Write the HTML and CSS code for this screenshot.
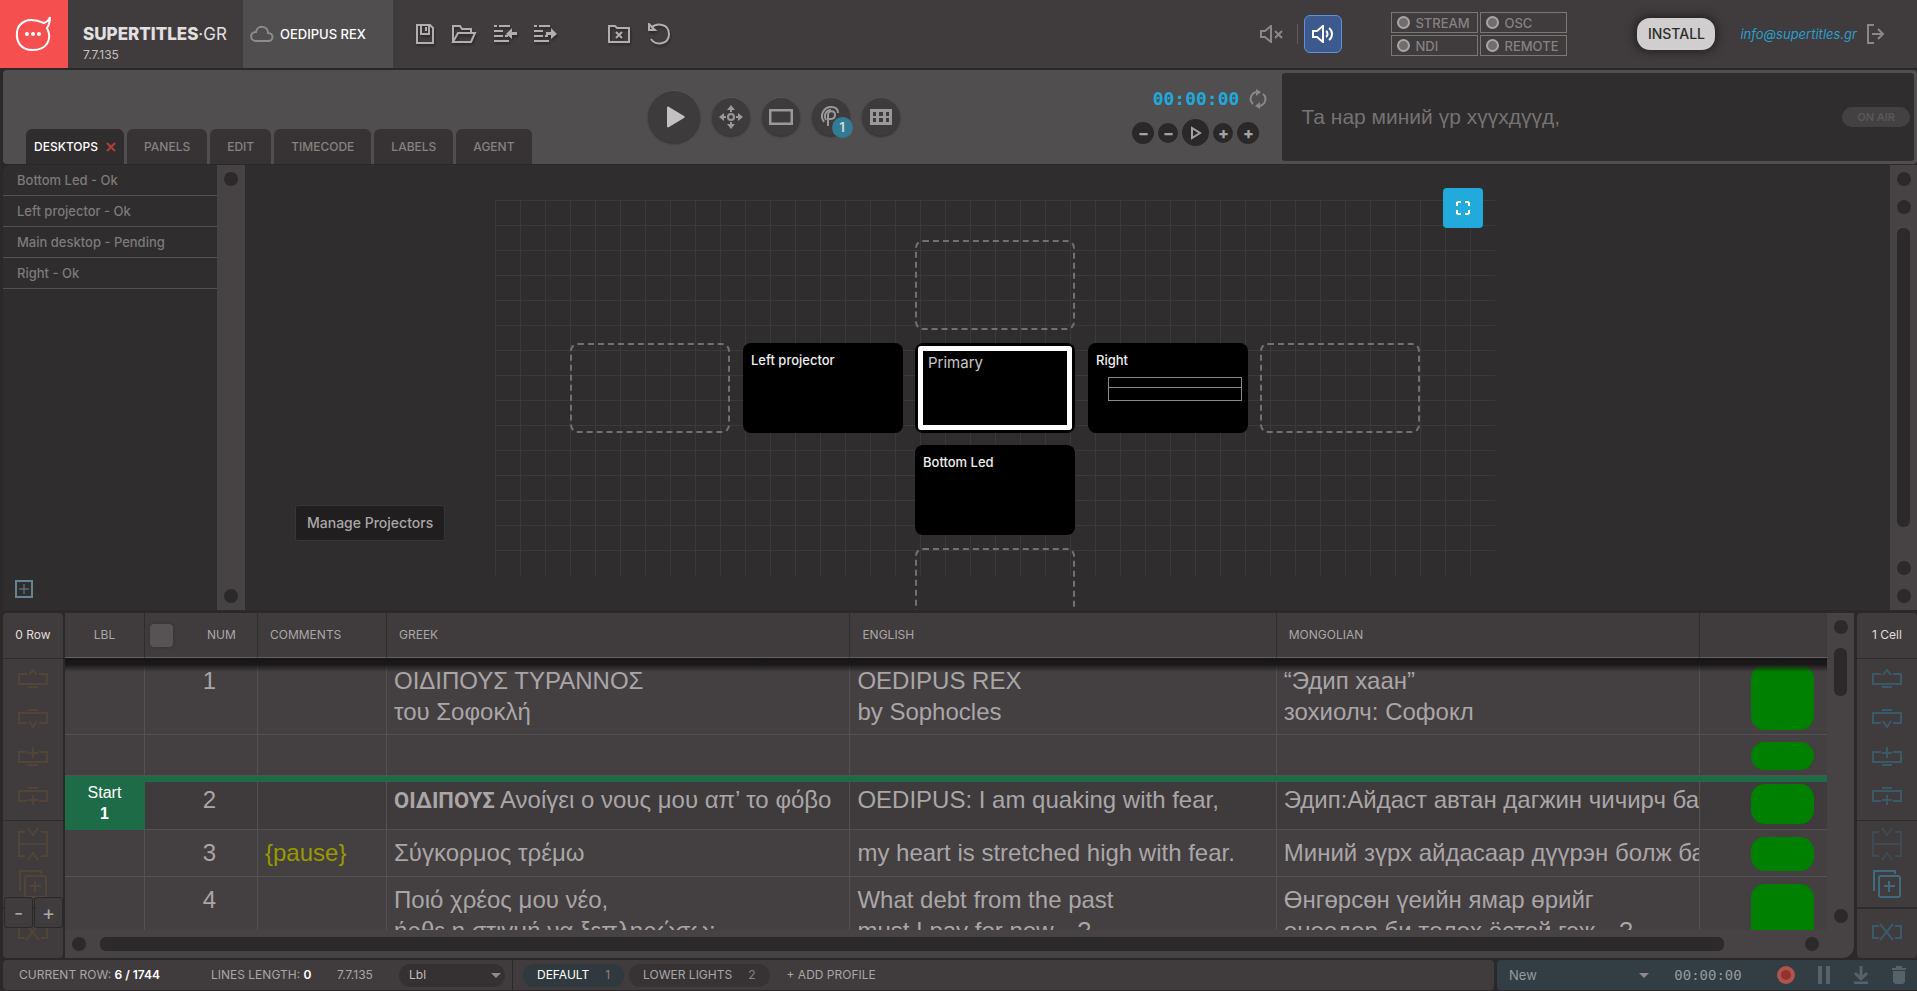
FILE: index.html
```html
<!DOCTYPE html>
<html lang="en">
<head>
<meta charset="utf-8">
<title>Supertitles - Oedipus Rex</title>
<link rel="stylesheet" href="styles.css">
</head>
<body>
<svg class="defs" aria-hidden="true">
  <symbol id="i-row-up" viewBox="0 0 30 20"><path d="M9 5H1v10h28V5h-8M10 18h10M11 6l4-5 4 5"/></symbol>
  <symbol id="i-row-down" viewBox="0 0 30 20"><path d="M9 15H1V5h28v10h-8M10 2h10M11 13l4 6 4-6"/></symbol>
  <symbol id="i-add-up" viewBox="0 0 30 20"><path d="M9 5H1v10h28V5h-8M10 18h10M10 6h10M15 0v11"/></symbol>
  <symbol id="i-add-down" viewBox="0 0 30 20"><path d="M9 15H1V5h28v10h-8M10 2h10M10 14h10M15 9v10"/></symbol>
  <symbol id="i-merge" viewBox="0 0 30 34"><path d="M7 5H1v24h6M23 5h6v24h-6M1 17h28M10 1l5 7 5-7M10 33l5-7 5 7"/></symbol>
  <symbol id="i-dup" viewBox="0 0 30 30"><path d="M2 22V2h21v3M9 7h17q2 0 2 2v17q0 2-2 2H9q-2 0-2-2V9q0-2 2-2zM12 17h11M17 12v11"/></symbol>
  <symbol id="i-del" viewBox="0 0 30 18"><path d="M7 3H1v12h6M23 3h6v12h-6M8 1l13 16M21 1L8 17"/></symbol>
  <symbol id="i-lines" viewBox="0 0 24 20"><path d="M1 2h3M6 2h11M1 7h9M1 12h9M12 12h3M1 17h15"/></symbol>
</svg>
<div class="app">
  <header class="topbar">
    <a class="logo" href="#" aria-label="Supertitles home">
      <svg width="38" height="38" viewBox="0 0 38 38" fill="none" stroke="#fff" stroke-width="2"><path d="M29 8c3-1 5-3 6-6 0 4-1 8-3 11 6 12-1 22-14 22S1 26 2 17 12 1 29 8z"/><g fill="#fff" stroke="none"><circle cx="12" cy="19" r="2"/><circle cx="18" cy="19" r="2"/><circle cx="24" cy="19" r="2"/></g></svg>
    </a>
    <div class="brand"><div class="brand-name"><b>SUPERTITLES</b>·GR</div><div class="version">7.7.135</div></div>
    <div class="project">
      <svg width="24" height="18" viewBox="0 0 24 18" fill="none" stroke="#8e8c8d" stroke-width="2"><path d="M6 16h12c6 0 6-8 0-8C18 0 7 0 6 7c-7 0-6 9 0 9z"/></svg>
      <span>OEDIPUS REX</span>
    </div>
    <nav class="filetools" aria-label="File">
      <button aria-label="Save"><svg width="20" height="20" viewBox="0 0 20 20"><path d="M2 1h13l3 3v15H2zM6 1v9h8V1M11 3v4"/></svg></button>
      <button aria-label="Open"><svg width="26" height="20" viewBox="0 0 26 20"><path d="M2 18V2h7l2 3h9v4M2 18L7 9h17l-4 9z"/></svg></button>
      <button aria-label="Import"><svg width="24" height="20" viewBox="0 0 24 20"><use href="#i-lines"/><path class="solid" d="M24 8v3h-5v4l-6-5 6-6v4z"/></svg></button>
      <button aria-label="Export"><svg width="24" height="20" viewBox="0 0 24 20"><use href="#i-lines"/><path class="solid" d="M13 8v3h5v4l6-5-6-6v4z"/></svg></button>
      <button class="gap" aria-label="Close project"><svg width="24" height="20" viewBox="0 0 24 20"><path d="M2 18V2h6l2 2h12v14zM9 8l6 6M15 8l-6 6"/></svg></button>
      <button aria-label="Undo"><svg width="24" height="22" viewBox="0 0 24 22"><path d="M4 5C10-1 22 1 22 11c0 11-14 12-18 5M2 1v6h6z"/></svg></button>
    </nav>
    <div class="topright">
      <button class="mute" aria-label="Mute"><svg width="24" height="18" viewBox="0 0 24 18" fill="none" stroke="#8a8788" stroke-width="2"><path d="M1 6h4l6-5v16l-6-5H1zM15 6l7 7M22 6l-7 7"/></svg></button>
      <span class="vline"></span>
      <button class="sound" aria-label="Sound on"><svg width="22" height="18" viewBox="0 0 22 18" fill="none" stroke="#fff" stroke-width="2"><path d="M1 6h4l6-5v16l-6-5H1zM14 6c2 1 2 5 0 6M17 3c4 3 4 9 0 12"/></svg></button>
      <div class="outputs">
        <button><i></i>STREAM</button><button><i></i>OSC</button><button><i></i>NDI</button><button><i></i>REMOTE</button>
      </div>
      <button class="install">INSTALL</button>
      <a class="mail" href="#">info@supertitles.gr</a>
      <button class="logout" aria-label="Log out"><svg width="18" height="20" viewBox="0 0 18 20" fill="none" stroke="#8a8788" stroke-width="2"><path d="M7 1H1v18h6M5 10h10M11 5l5 5-5 5"/></svg></button>
    </div>
  </header>

  <section class="toolbar">
    <nav class="tabs" aria-label="Views">
      <button class="tab on">DESKTOPS <span class="x"><svg width="10" height="10" viewBox="0 0 10 10" stroke="#b04038" stroke-width="2"><path d="M1 1l8 8M9 1L1 9"/></svg></span></button><button class="tab">PANELS</button><button class="tab">EDIT</button><button class="tab">TIMECODE</button><button class="tab">LABELS</button><button class="tab">AGENT</button>
    </nav>
    <div class="transport">
      <button class="round big" aria-label="Play"><svg width="20" height="22" viewBox="0 0 20 22"><path fill="#c4c1c1" d="M1 2c0-1 1-2 2-1l15 9c1 1 1 1 0 2L3 21c-1 1-2 0-2-1z"/></svg></button>
      <button class="round" aria-label="Move"><svg width="24" height="24" viewBox="0 0 24 24" fill="none" stroke="#9b9899" stroke-width="2"><circle cx="12" cy="12" r="3"/><path d="M12 7V2M12 17v5M7 12H2M17 12h5"/><path fill="#9b9899" stroke="none" d="M8 5l4-5 4 5zM8 19l4 5 4-5zM5 8l-5 4 5 4zM19 8l5 4-5 4z"/></svg></button>
      <button class="round" aria-label="Frame"><svg width="24" height="16" viewBox="0 0 24 16" fill="none" stroke="#9b9899" stroke-width="3"><path d="M1 1h22v14H1z"/></svg></button>
      <button class="round" aria-label="Panic"><svg width="22" height="22" viewBox="0 0 22 22" fill="none" stroke="#9b9899" stroke-width="2"><path d="M4 16C-1 9 4 1 11 1c4 0 7 2 7 6M8 20V9c0-5 7-5 7 0s-6 4-6 4"/><path d="M6 14C3 8 7 4 11 4"/></svg><span class="badge">1</span></button>
      <button class="round" aria-label="Grid"><svg width="22" height="16" viewBox="0 0 22 16"><path fill="#9b9899" fill-rule="evenodd" d="M0 0h22v16H0zM3 3v4h3V3zM9 3v4h4V3zM16 3v4h3V3zM3 9v4h3V9zM9 9v4h4V9zM16 9v4h3V9z"/></svg></button>
    </div>
    <div class="clock">
      <div class="clock-top"><span class="time">00:00:00</span>
        <button aria-label="Reset"><svg width="18" height="20" viewBox="0 0 18 20" fill="none" stroke="#8a8788" stroke-width="2"><path d="M7 3C1 5 0 12 4 15M11 17c6-2 7-9 3-12"/><path fill="#8a8788" stroke="none" d="M7 0l5 3-5 4zM11 13v7l-5-3z"/></svg></button></div>
      <div class="clock-row">
        <button class="step l" aria-label="Back 10">−</button><button class="step" aria-label="Back 1">−</button>
        <button class="step p" aria-label="Run"><svg width="12" height="14" viewBox="0 0 12 14" fill="none" stroke="#a5a2a3" stroke-width="2"><path d="M2 2v10l8-5z"/></svg></button>
        <button class="step" aria-label="Forward 1">+</button><button class="step l" aria-label="Forward 10">+</button>
      </div>
    </div>
    <div class="preview"><span>Та нар миний үр хүүхдүүд,</span><span class="onair">ON AIR</span></div>
  </section>

  <main class="desk">
    <aside class="projectors">
      <ul><li>Bottom Led - Ok</li><li>Left projector - Ok</li><li>Main desktop - Pending</li><li>Right - Ok</li></ul>
      <button class="add" aria-label="Manage projectors"><svg width="18" height="18" viewBox="0 0 18 18" fill="none" stroke="#668390" stroke-width="2"><path d="M1 1h16v16H1z"/><path d="M4 9h10M9 4v10" stroke-width="1"/></svg></button>
    </aside>
    <div class="vbar"><i class="dot"></i><i class="dot end"></i></div>
    <div class="stage">
      <div class="canvas">
        <div class="node empty n-top"></div>
        <div class="node empty n-l2"></div>
        <div class="node n-l1">Left projector</div>
        <div class="node primary n-c"><span>Primary</span></div>
        <div class="node n-r1">Right<div class="lines"><i></i></div></div>
        <div class="node empty n-r2"></div>
        <div class="node n-b1">Bottom Led</div>
        <div class="node empty n-b2"></div>
        <button class="fit" aria-label="Fit to screen"><svg width="16" height="16" viewBox="0 0 16 16" fill="none" stroke="#fff" stroke-width="2"><path d="M2 6V3l1-1h3M10 2h3l1 1v3M14 10v3l-1 1h-3M6 14H3l-1-1v-3"/></svg></button>
      </div>
      <div class="tip" role="tooltip">Manage Projectors</div>
    </div>
    <div class="vbar"><i class="dot"></i><i class="dot"></i><i class="thumb"></i><i class="dot tail"></i><i class="dot"></i></div>
  </main>

  <section class="script">
    <aside class="side gold">
      <div class="side-head">0 Row</div>
      <button aria-label="Move row up"><svg width="30" height="20"><use href="#i-row-up"/></svg></button>
      <button aria-label="Move row down"><svg width="30" height="20"><use href="#i-row-down"/></svg></button>
      <button aria-label="Add row above"><svg width="30" height="20"><use href="#i-add-up"/></svg></button>
      <button aria-label="Add row below"><svg width="30" height="20"><use href="#i-add-down"/></svg></button>
      <hr>
      <button class="tall" aria-label="Merge rows"><svg width="30" height="34"><use href="#i-merge"/></svg></button>
      <button class="dup" aria-label="Duplicate row"><svg width="30" height="30"><use href="#i-dup"/></svg></button>
      <hr class="tight">
      <button class="tall" aria-label="Delete row"><svg width="30" height="18"><use href="#i-del"/></svg></button>
      <button class="next" aria-label="More"><svg width="30" height="20"><use href="#i-row-up"/></svg></button>
      <div class="zoomer"><button>-</button><button>+</button></div>
    </aside>
    <div class="sheet">
      <div class="sheet-main">
        <div class="clip">
          <table>
            <colgroup><col class="c-lbl"><col class="c-num"><col class="c-com"><col class="c-gr"><col class="c-en"><col class="c-mn"><col></colgroup>
            <thead><tr><th class="mid">LBL</th><th><label class="numhead"><input type="checkbox" aria-label="Select all"><span>NUM</span></label></th><th>COMMENTS</th><th>GREEK</th><th>ENGLISH</th><th>MONGOLIAN</th><th></th></tr></thead>
            <tbody>
              <tr><td></td><td class="num">1</td><td></td><td>ΟΙΔΙΠΟΥΣ ΤΥΡΑΝΝΟΣ<br>του Σοφοκλή</td><td>OEDIPUS REX<br>by Sophocles</td><td>“Эдип хаан”<br>зохиолч: Софокл</td><td><span class="pill xl"></span></td></tr>
              <tr class="blank"><td></td><td></td><td></td><td></td><td></td><td></td><td><span class="pill sm"></span></td></tr>
              <tr class="start"><td class="lab">Start<br><b>1</b></td><td class="num">2</td><td></td><td><b class="who">ΟΙΔΙΠΟΥΣ</b> Ανοίγει ο νους μου απ’ το φόβο</td><td>OEDIPUS: I am quaking with fear,</td><td>Эдип:Айдаст автан дагжин чичирч байна</td><td><span class="pill lg"></span></td></tr>
              <tr><td></td><td class="num">3</td><td class="note">{pause}</td><td>Σύγκορμος τρέμω</td><td>my heart is stretched high with fear.</td><td>Миний зүрх айдасаар дүүрэн болж байна</td><td><span class="pill md"></span></td></tr>
              <tr><td></td><td class="num">4</td><td></td><td>Ποιό χρέος μου νέο,<br>ήρθε η στιγμή να ξεπληρώσω;</td><td>What debt from the past<br>must I pay for now…?</td><td>Өнгөрсөн үеийн ямар өрийг<br>өнөөдөр би төлөх ёстой гэж…?</td><td><span class="pill xl"></span></td></tr>
            </tbody>
          </table>
        </div>
        <div class="vbar"><i class="dot"></i><i class="thumb short"></i><i class="dot tail"></i></div>
      </div>
      <div class="hbar"><i class="dot"></i><i class="hthumb"></i><i class="dot"></i></div>
    </div>
    <aside class="side teal">
      <div class="side-head">1 Cell</div>
      <button aria-label="Move cell up"><svg width="30" height="20"><use href="#i-row-up"/></svg></button>
      <button aria-label="Move cell down"><svg width="30" height="20"><use href="#i-row-down"/></svg></button>
      <button aria-label="Add cell above"><svg width="30" height="20"><use href="#i-add-up"/></svg></button>
      <button aria-label="Add cell below"><svg width="30" height="20"><use href="#i-add-down"/></svg></button>
      <hr>
      <button class="tall off" aria-label="Merge cells"><svg width="30" height="34"><use href="#i-merge"/></svg></button>
      <button class="dup strong" aria-label="Duplicate cell"><svg width="30" height="30"><use href="#i-dup"/></svg></button>
      <hr class="tight">
      <button class="tall" aria-label="Delete cell"><svg width="30" height="18"><use href="#i-del"/></svg></button>
      <button class="next" aria-label="More"><svg width="30" height="20"><use href="#i-row-up"/></svg></button>
    </aside>
  </section>

  <footer class="status">
    <div class="status-left">
      <span class="s-row">CURRENT ROW: <b>6 / 1744</b></span>
      <span class="s-len">LINES LENGTH: <b>0</b></span>
      <span class="s-ver">7.7.135</span>
      <div class="sel lbl"><select aria-label="Label"><option>Lbl</option></select></div>
      <div class="profiles">
        <button class="prof on">DEFAULT <span>1</span></button>
        <button class="prof">LOWER LIGHTS <span>2</span></button>
        <button class="newprof">+ ADD PROFILE</button>
      </div>
    </div>
    <div class="status-right">
      <div class="sel rec"><select aria-label="Recording"><option>New</option></select></div>
      <span class="rectime">00:00:00</span>
      <div class="rectools">
        <button aria-label="Record"><svg width="18" height="18" viewBox="0 0 18 18"><circle cx="9" cy="9" r="7" fill="#94312f" stroke="#ad544c" stroke-width="4"/></svg></button>
        <button aria-label="Pause"><svg width="12" height="18" viewBox="0 0 12 18" fill="#55626a"><path d="M0 0h4v18H0zM8 0h4v18H8z"/></svg></button>
        <button aria-label="Download"><svg width="16" height="18" viewBox="0 0 16 18" fill="none" stroke="#55626a" stroke-width="3"><path d="M8 0v12M2 7l6 6 6-6M1 17h14"/></svg></button>
        <button aria-label="Delete"><svg width="14" height="18" viewBox="0 0 14 18" fill="#55626a"><path d="M0 2h4V0h6v2h4v2H0zM1 5h12v11l-2 2H3l-2-2z"/></svg></button>
      </div>
    </div>
  </footer>
</div>
</body>
</html>
```
FILE: styles.css
```css
* { box-sizing: border-box; }
body { margin: 0; background: #2b2829; color: #a9a6a7; font: 14px/20px Inter, "Noto Sans", sans-serif; }
button { font: inherit; color: inherit; background: none; border: 0; padding: 0; display: flex; align-items: center; justify-content: center; flex: none; }
a { color: inherit; }
svg { display: block; flex: none; }
.defs { position: absolute; width: 0; height: 0; }
.app { display: flex; flex-direction: column; height: 100vh; overflow: hidden; }

/* Top bar */
.topbar { display: flex; flex: none; height: 68px; background: #403b3c; }
.logo { width: 68px; display: flex; align-items: center; justify-content: center; background: #f5504f; }
.brand { width: 175px; padding: 24px 0 0 15px; white-space: nowrap; color: #e2e0e0; }
.brand-name { font-size: 17px; line-height: 20px; }
.brand-name b { font-weight: 800; }
.version { font-size: 12px; line-height: 22px; color: #c4c1c2; }
.project { width: 150px; display: flex; align-items: center; gap: 6px; padding-left: 7px; background: #504e4f; color: #fff; font-weight: 500; font-size: 13px; white-space: nowrap; }
.filetools { display: flex; align-items: center; gap: 16px; margin-left: 22px; }
.filetools svg { fill: none; stroke: #b1aeae; stroke-width: 2; filter: drop-shadow(1px 2px 1px #2b2829); }
.filetools .solid { fill: #b1aeae; stroke: none; }
.filetools .gap { margin-left: 34px; }
.topright { margin-left: auto; display: flex; align-items: center; padding-right: 32px; }
.vline { width: 1px; height: 20px; background: #605c5d; margin: 0 6px 0 13px; }
.sound { width: 38px; height: 38px; border: 1px solid #5c92da; border-radius: 6px; background: #3d5a8f; }
.outputs { display: grid; grid-template-columns: 87px 87px; gap: 2px; margin-left: 49px; }
.outputs button { height: 21px; border: 1px solid #7a7777; justify-content: flex-start; gap: 5px; padding-left: 5px; font-size: 13px; font-weight: 500; color: #858283; }
.outputs i { width: 13px; height: 13px; border-radius: 50%; background: #706d6d; border: 2px solid #a9a7a6; }
.install { width: 78px; height: 32px; margin-left: 70px; border-radius: 13px; background: #d0cece; color: #2f2c2d; font-weight: 500; box-shadow: 0 0 10px 2px #242122; }
.mail { margin: 0 10px 0 25px; color: #2a9fce; font-style: italic; font-size: 13px; text-decoration: none; }

/* Toolbar */
.toolbar { display: flex; flex: none; height: 94px; margin: 2px 0 0 3px; border-radius: 4px; background: #504e4f; }
.tabs { display: flex; align-items: flex-end; gap: 3px; padding-left: 23px; }
.tab { height: 35px; padding: 0 17px; border-radius: 6px 6px 0 0; background: #373334; color: #858182; font-size: 12px; font-weight: 500; }
.tab.on { gap: 8px; padding: 0 8px; background: #2f2d2e; color: #fff; }
.transport { display: flex; align-items: center; gap: 12px; margin-left: 116px; }
.round { position: relative; width: 38px; height: 38px; border-radius: 50%; background: #3d3b3b; box-shadow: 0 1px 2px #333031, 0 -1px 1px #5a5858; }
.round.big { width: 52px; height: 52px; padding-left: 4px; }
.badge { position: absolute; right: -3px; bottom: -2px; width: 21px; height: 21px; border-radius: 50%; background: #357a93; color: #c1d5dc; font: bold 13px/21px Inter, sans-serif; }
.clock { margin-left: auto; display: flex; flex-direction: column; align-items: flex-end; gap: 9px; padding: 18px 15px 0 0; }
.clock-top { display: flex; align-items: center; gap: 10px; height: 22px; }
.time { font: bold 18px/22px "DejaVu Sans Mono", monospace; color: #20a9dc; }
.clock-row { display: flex; align-items: center; gap: 4px; margin-right: 8px; }
.step { width: 20px; height: 20px; border-radius: 50%; background: #2b2829; color: #a5a2a3; font-weight: 800; font-size: 16px; line-height: 20px; }
.step.l { width: 22px; height: 22px; }
.step.p { width: 27px; height: 27px; padding-left: 1px; }
.preview { flex: 0 0 33%; display: flex; align-items: center; justify-content: space-between; margin: 3px 3px 3px 0; padding: 0 4px 0 19px; border-radius: 3px; background: #2f2d2e; color: #767374; font: 21px/30px "Liberation Sans", Arial, sans-serif; }
.onair { padding: 0 15px; border-radius: 10px; background: #444142; color: #5a5758; font: 600 11px/20px Inter, sans-serif; }

/* Desktops view */
.desk { display: flex; flex: 0 1 445px; min-height: 0; margin: 1px 0 0 3px; background: #2f2d2e; border-radius: 8px 0 0 0; }
.projectors { width: 214px; flex: none; display: flex; flex-direction: column; justify-content: space-between; align-items: flex-start; }
.projectors ul { width: 100%; margin: 0; padding: 0; list-style: none; }
.projectors li { padding: 5px 14px; border-bottom: 1px solid #545152; color: #7d7a7a; font-size: 13px; font-weight: 500; }
.add { margin: 0 0 12px 12px; }
.vbar { flex: none; width: 28px; display: flex; flex-direction: column; align-items: center; gap: 14px; padding: 7px 0; background: #474344; }
.stage + .vbar, .clip + .vbar { width: 27px; }
.dot { flex: none; width: 14px; height: 14px; border-radius: 50%; background: #2b292a; }
.end, .tail { margin-top: auto; }
.thumb { flex: 0 1 299px; width: 13px; border-radius: 6px; background: #2b292a; }
.short { flex-basis: 48px; }
.stage { position: relative; flex: 1; min-width: 0; overflow: hidden; }
.canvas { position: absolute; left: 250px; top: 35px; width: 1000px; height: 375px; background: repeating-linear-gradient(90deg, #3b393a 0 1px, transparent 1px 25px), repeating-linear-gradient(#3b393a 0 1px, transparent 1px 25px); }
.node { position: absolute; width: 160px; height: 90px; border-radius: 8px; background: #000; color: #eee; font-size: 13px; font-weight: 500; padding: 7px 8px; }
.empty { background: none; border: 2px dashed #737071; }
.n-top { left: 420px; top: 40px; }
.n-l2 { left: 75px; top: 143px; }
.n-l1 { left: 248px; top: 143px; }
.n-c { left: 420px; top: 143px; }
.n-r1 { left: 593px; top: 143px; }
.n-r2 { left: 765px; top: 143px; }
.n-b1 { left: 420px; top: 245px; }
.n-b2 { left: 420px; top: 348px; }
.primary { padding: 3px; }
.primary span { display: block; height: 84px; padding: 2px 5px; border: 5px solid #fff; border-radius: 3px; color: #c9c7c7; font-size: 15px; font-weight: 400; }
.lines { height: 24px; margin: 7px -2px 0 12px; border: 1px solid #8b8989; }
.lines i { display: block; height: 10px; border-bottom: 1px solid #8b8989; }
.fit { position: absolute; left: 948px; top: -12px; width: 40px; height: 40px; border-radius: 4px; background: #22aadd; }
.tip { position: absolute; left: 50px; top: 340px; padding: 7px 11px; border: 1px solid #393637; border-radius: 3px; background: #201e1f; color: #aaa7a8; font-size: 14px; font-weight: 500; }

/* Script table */
.script { display: flex; flex: 1; min-height: 0; gap: 2px; margin: 3px 0 2px 3px; }
.side { position: relative; flex: none; width: 60px; overflow: hidden; border-radius: 4px; background: #403b3c; display: flex; flex-direction: column; }
.side > button { height: 39px; }
.side > .tall { height: 46px; }
.side > .dup { height: 34px; }
.side svg { fill: none; stroke: currentColor; stroke-width: 2; }
.side > .next { height: 20px; margin-top: 3px; align-items: flex-start; }
.side-head { flex: none; height: 46px; border-bottom: 1px solid #2f2c2d; color: #e0dede; font-size: 12px; line-height: 44px; text-align: center; }
.side hr { width: 100%; height: 1px; margin: 5px 0 0; border: 0; background: #2f2c2d; flex: none; }
.side .tight { height: 2px; margin-top: 6px; }
.gold { color: #514539; }
.teal { color: #3b5a68; margin-left: 1px; }
.teal .off { color: #3e4b52; }
.teal .strong { color: #406b7e; }
.zoomer { position: absolute; left: 1px; right: 0; bottom: 30px; display: flex; gap: 1px; }
.zoomer button { flex: 1; height: 31px; border: 1px solid #2b2829; border-radius: 3px; background: #403b3c; color: #aaa7a8; font-size: 20px; }
.sheet { flex: 1; min-width: 0; display: flex; flex-direction: column; border-radius: 0 0 12px 0; overflow: hidden; background: #474344; }
.sheet-main { display: flex; flex: 1; min-height: 0; }
.clip { flex: 1; min-width: 0; overflow: hidden; background: #443f41; }
table { width: 100%; table-layout: fixed; border-collapse: separate; border-spacing: 0; font: 24px/31px "Liberation Sans", Arial, sans-serif; }
.c-lbl { width: 80px; }
.c-num { width: 113px; }
.c-com { width: 129px; }
.c-gr { width: 26.3%; }
.c-en { width: 24.2%; }
.c-mn { width: 24%; }
th { position: relative; height: 45px; padding: 0 12px; border-right: 1px solid #2f2c2d; border-bottom: 1px solid #656162; background: #403b3c; color: #aaa7a8; font: 12px/20px Inter, sans-serif; text-align: left; }
th:last-child, td:last-child { border-right: 0; }
th::after { content: ""; position: absolute; z-index: 2; left: 0; right: -1px; top: 100%; height: 14px; margin-top: 1px; background: linear-gradient(#181516, #1b1819 45%, transparent); }
.mid { text-align: center; }
.numhead { display: flex; align-items: center; gap: 34px; margin-left: -7px; }
.numhead input { appearance: none; width: 23px; height: 23px; margin: 0; border-radius: 4px; background: #575354; box-shadow: 0 0 3px #333031; }
td { height: 47px; padding: 7px 7px; border-right: 1px solid #545152; border-bottom: 1px solid #545152; vertical-align: top; white-space: nowrap; overflow: hidden; }
.note { color: #999900; }
.who { font-family: Roboto, "Liberation Sans", sans-serif; font-size: 22px; }
.blank td { height: 41px; }
.start td { height: 53px; padding-top: 2px; padding-bottom: 13px; border-top: 6px solid #1d6b47; background: #3f3a3c; }
td.num { text-align: center; padding-left: 24px; }
.start .lab { background: #1d6b47; border-color: #1d6b47; color: #fff; font-size: 16px; line-height: 21px; padding: 0; text-align: center; }
.pill { display: block; width: 63px; margin: 0 6px 0 auto; border-radius: 14px; background: #008000; }
.xl { height: 65px; margin-bottom: -3px; }
.sm { height: 28px; margin-bottom: -3px; }
.lg { height: 40px; margin-bottom: -9px; }
.md { height: 34px; margin-bottom: -3px; }
.hbar { flex: none; height: 28px; display: flex; align-items: center; justify-content: space-between; padding: 0 35px 0 7px; }
.hthumb { width: 93%; height: 14px; margin: 0 67px 0 0; border-radius: 6px; background: #2b292a; }

/* Status bar */
.status { display: flex; flex: none; height: 31px; gap: 3px; padding-left: 3px; font-size: 12px; white-space: nowrap; border-bottom: 1px solid #2b2829; }
.status-left { flex: 1; display: flex; align-items: center; padding-left: 16px; border-radius: 4px; background: #403b3c; }
.status b { color: #fff; font-weight: 600; }
.s-row { width: 192px; }
.s-len { width: 126px; }
.s-ver { width: 62px; }
.sel { position: relative; }
.sel::after { content: ""; position: absolute; top: 9px; right: 4px; border: 5px solid transparent; border-top-color: #8e8b8c; pointer-events: none; }
.sel select { appearance: none; width: 100%; height: 23px; border: 0; border-radius: 12px; padding: 0 10px; background: #353132; color: #c1bebf; font: inherit; }
.lbl { width: 106px; }
.profiles { display: flex; align-items: center; height: 100%; gap: 5px; margin-left: 7px; padding-left: 10px; border-left: 1px solid #2b2829; }
.prof { height: 23px; gap: 16px; padding: 0 14px; border-radius: 12px; background: #373334; }
.prof span { color: #858283; }
.prof.on { background: #2f393e; color: #fff; }
.newprof { margin-left: 12px; }
.status-right { flex: 0 0 420px; display: flex; align-items: center; justify-content: space-between; padding: 0 11px 0 2px; border-radius: 4px 0 0 4px; background: #323d44; color: #969b9e; }
.rec { width: 154px; font-size: 13px; }
.rec select { background: none; color: inherit; }
.rectime { margin-right: 14px; font: 14px/20px "DejaVu Sans Mono", monospace; }
.rectools { display: flex; align-items: center; gap: 23px; }
```
